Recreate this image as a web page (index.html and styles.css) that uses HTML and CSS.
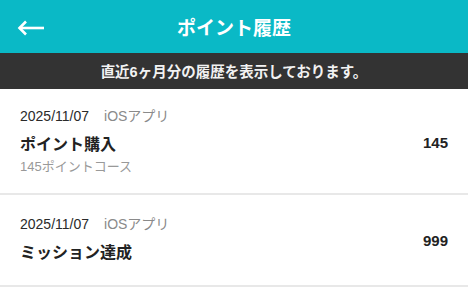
FILE: index.html
```html
<!DOCTYPE html>
<html lang="ja">
<head>
<meta charset="utf-8">
<title>ポイント履歴</title>
<link rel="stylesheet" href="styles.css">
</head>
<body>
<header class="appbar">
  <button class="back" aria-label="戻る">
    <svg width="28" height="16" viewBox="0 0 28 16" fill="none" stroke="#fff" stroke-width="2.6" stroke-linecap="butt" stroke-linejoin="miter">
      <path d="M2.5 8 H27"/>
      <path d="M9 1.5 L2.5 8 L9 14.5"/>
    </svg>
  </button>
  <h1 class="title">ポイント履歴</h1>
  <span></span>
</header>
<div class="notice">直近6ヶ月分の履歴を表示しております。</div>
<ul class="list">
  <li class="item">
    <div class="body">
      <div class="meta"><span class="date">2025/11/07</span><span class="source">iOSアプリ</span></div>
      <div class="name">ポイント購入</div>
      <div class="sub">145ポイントコース</div>
    </div>
    <div class="points">145</div>
  </li>
  <li class="item">
    <div class="body">
      <div class="meta"><span class="date">2025/11/07</span><span class="source">iOSアプリ</span></div>
      <div class="name">ミッション達成</div>
    </div>
    <div class="points">999</div>
  </li>
</ul>
</body>
</html>
```

FILE: styles.css
```css
* { box-sizing: border-box; }
html, body {
  margin: 0;
  padding: 0;
  background: #fff;
  font-family: "Liberation Sans", "Noto Sans CJK JP", sans-serif;
}
.appbar {
  height: 53px;
  background: #0ab9c6;
  display: grid;
  grid-template-columns: 1fr auto 1fr;
  align-items: center;
}
.back {
  justify-self: start;
  margin-left: 17px;
  padding: 0;
  border: 0;
  background: none;
  display: flex;
  align-items: center;
  height: 28px;
  margin-top: 2px;
}
.title {
  margin: 0;
  color: #fff;
  font-size: 19px;
  font-weight: 700;
  line-height: 24px;
  font-family: "Noto Sans CJK JP", sans-serif;
}
.notice {
  height: 36px;
  background: #333333;
  color: #f2f2f2;
  font-size: 14.5px;
  font-weight: 700;
  line-height: 36px;
  text-align: center;
  padding-top: 1px;
}
.list {
  list-style: none;
  margin: 0;
  padding: 0;
}
.item {
  display: flex;
  align-items: center;
  justify-content: space-between;
  min-height: 92px;
  padding: 18px 20px 17px;
  border-bottom: 2px solid #e8e8e8;
}
.item + .item {
  padding-top: 16px;
}
.meta {
  display: flex;
  gap: 15px;
  font-size: 14px;
  line-height: 18px;
}
.date { color: #2a2a2a; }
.source { color: #8a8a8a; }
.name {
  margin-top: 9px;
  font-size: 16px;
  font-weight: 700;
  line-height: 22px;
  color: #222;
}
.sub {
  margin-top: 2px;
  font-size: 13px;
  line-height: 18px;
  color: #999;
}
.points {
  font-size: 15px;
  font-weight: 700;
  color: #222;
  margin-top: 1px;
}
```
